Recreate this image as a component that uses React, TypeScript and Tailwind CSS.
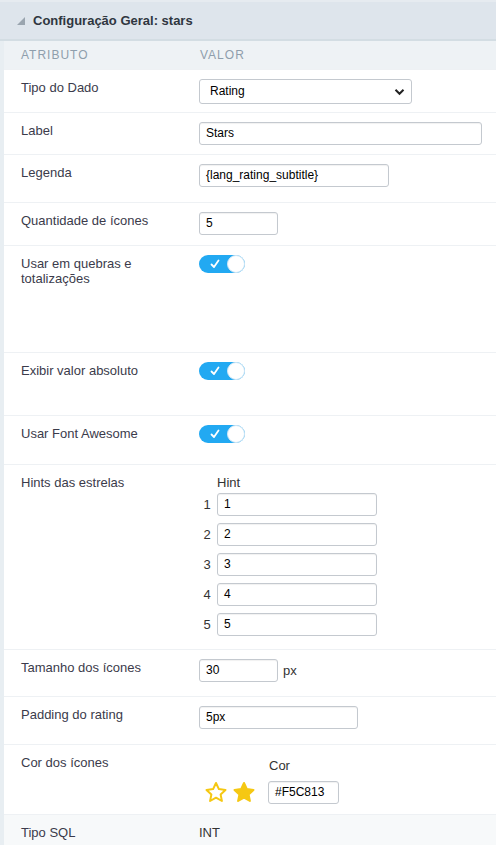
import type { ReactNode } from "react";

type RowProps = {
  label: ReactNode;
  h: string;
  shade?: boolean;
  children?: ReactNode;
};

function Row({ label, h, shade, children }: RowProps) {
  return (
    <div
      className={`grid grid-cols-[195px_1fr] border-t border-[#eef1f4] ${h} ${
        shade ? "bg-[#f7f9fa]" : "bg-white"
      }`}
    >
      <div className="pl-[17px] pt-[10px] pr-2 text-[13px] leading-[15px] text-[#3b3b4b]">{label}</div>
      <div className="pt-[9px] text-[13px] leading-[15px] text-[#333]">{children}</div>
    </div>
  );
}

function TextInput({ value, w }: { value: string; w: string }) {
  return (
    <div
      className={`${w} h-[23px] rounded-[3px] border border-[#c4c9cf] bg-white pl-[6px] text-[12px] leading-[21px] text-black shadow-[inset_0_1px_1px_rgba(0,0,0,0.06)]`}
    >
      {value}
    </div>
  );
}

function Toggle() {
  return (
    <div className="relative h-[18px] w-[46px] rounded-full bg-[#22a9f2]">
      <svg className="absolute left-[11px] top-[4px]" width="10" height="10" viewBox="0 0 10 10">
        <path d="M1.5 5.5 L4 8 L8.5 1.5" fill="none" stroke="white" strokeWidth="1.8" strokeLinecap="round" strokeLinejoin="round" />
      </svg>
      <div className="absolute right-0 top-0 h-[18px] w-[18px] rounded-full border border-[#cfe6f5] bg-white" />
    </div>
  );
}

function Star({ filled }: { filled?: boolean }) {
  return (
    <svg width="24" height="23" viewBox="0 0 24 23">
      <path
        d="M12 2 L14.9 8.1 L21.5 8.9 L16.6 13.4 L17.9 20 L12 16.7 L6.1 20 L7.4 13.4 L2.5 8.9 L9.1 8.1 Z"
        fill={filled ? "#f5c813" : "none"}
        stroke="#f5c813"
        strokeWidth="2"
        strokeLinejoin="round"
      />
    </svg>
  );
}

export default function App() {
  const hints = ["1", "2", "3", "4", "5"];

  return (
    <div className="h-[845px] w-[496px] overflow-hidden bg-white font-['Liberation_Sans',Arial,sans-serif]">
      <div className="flex h-[41px] items-center border-t-[2px] border-b-[2px] border-t-[#e6ebf0] border-b-[#d3dde3] bg-[#dee5ec] pl-[17px]">
        <svg width="8" height="8" viewBox="0 0 8 8" className="mr-[8px] mt-[1px]">
          <path d="M8 0 L8 8 L0 8 Z" fill="#9aa5af" />
        </svg>
        <span className="mt-[1px] text-[13px] font-bold text-[#2f3640]">Configuração Geral: stars</span>
      </div>

      <div className="border-l-4 border-[#e8eef2]">
        <div className="grid h-[28px] grid-cols-[195px_1fr] items-center bg-[#eef2f5] text-[12px] tracking-[1px] text-[#8e9eac]">
          <div className="pl-[17px]">ATRIBUTO</div>
          <div className="pl-[1px]">VALOR</div>
        </div>

        <Row label="Tipo do Dado" h="h-[43px]">
          <div className="flex h-[25px] w-[213px] items-center justify-between rounded-[3px] border border-[#c4c9cf] bg-white pl-[10px] pr-[6px] text-[12px] text-black">
            <span>Rating</span>
            <svg width="11" height="8" viewBox="0 0 11 8">
              <path d="M1.5 1.8 L5.5 5.8 L9.5 1.8" fill="none" stroke="#222" strokeWidth="2" />
            </svg>
          </div>
        </Row>

        <Row label="Label" h="h-[42px]">
          <TextInput value="Stars" w="w-[283px]" />
        </Row>

        <Row label="Legenda" h="h-[48px]">
          <TextInput value="{lang_rating_subtitle}" w="w-[190px]" />
        </Row>

        <Row label="Quantidade de ícones" h="h-[43px]">
          <TextInput value="5" w="w-[79px]" />
        </Row>

        <Row label={<>Usar em quebras e<br />totalizações</>} h="h-[107px]">
          <Toggle />
        </Row>

        <Row label="Exibir valor absoluto" h="h-[63px]">
          <Toggle />
        </Row>

        <Row label="Usar Font Awesome" h="h-[49px]">
          <Toggle />
        </Row>

        <Row label="Hints das estrelas" h="h-[185px]">
          <div className="ml-[18px] pt-[1px]">Hint</div>
          <div className="mt-[3px] flex flex-col gap-[7px]">
            {hints.map((n) => (
              <div key={n} className="flex items-center">
                <span className="w-[18px] pr-[2px] text-center">{n}</span>
                <TextInput value={n} w="w-[160px]" />
              </div>
            ))}
          </div>
        </Row>

        <Row label="Tamanho dos ícones" h="h-[47px]">
          <div className="flex items-center">
            <TextInput value="30" w="w-[79px]" />
            <span className="ml-[5px]">px</span>
          </div>
        </Row>

        <Row label="Padding do rating" h="h-[48px]">
          <TextInput value="5px" w="w-[159px]" />
        </Row>

        <Row label="Cor dos ícones" h="h-[70px]">
          <div className="flex items-end">
            <div className="flex items-center gap-[4px] pl-[5px]">
              <Star />
              <Star filled />
            </div>
            <div className="ml-[12px] flex flex-col">
              <span className="mt-[4px] pl-[1px]">Cor</span>
              <div className="mt-[8px]">
                <TextInput value="#F5C813" w="w-[71px]" />
              </div>
            </div>
          </div>
        </Row>

        <Row label="Tipo SQL" h="h-[40px]" shade>
          <div className="pt-[1px]">INT</div>
        </Row>
      </div>
    </div>
  );
}
